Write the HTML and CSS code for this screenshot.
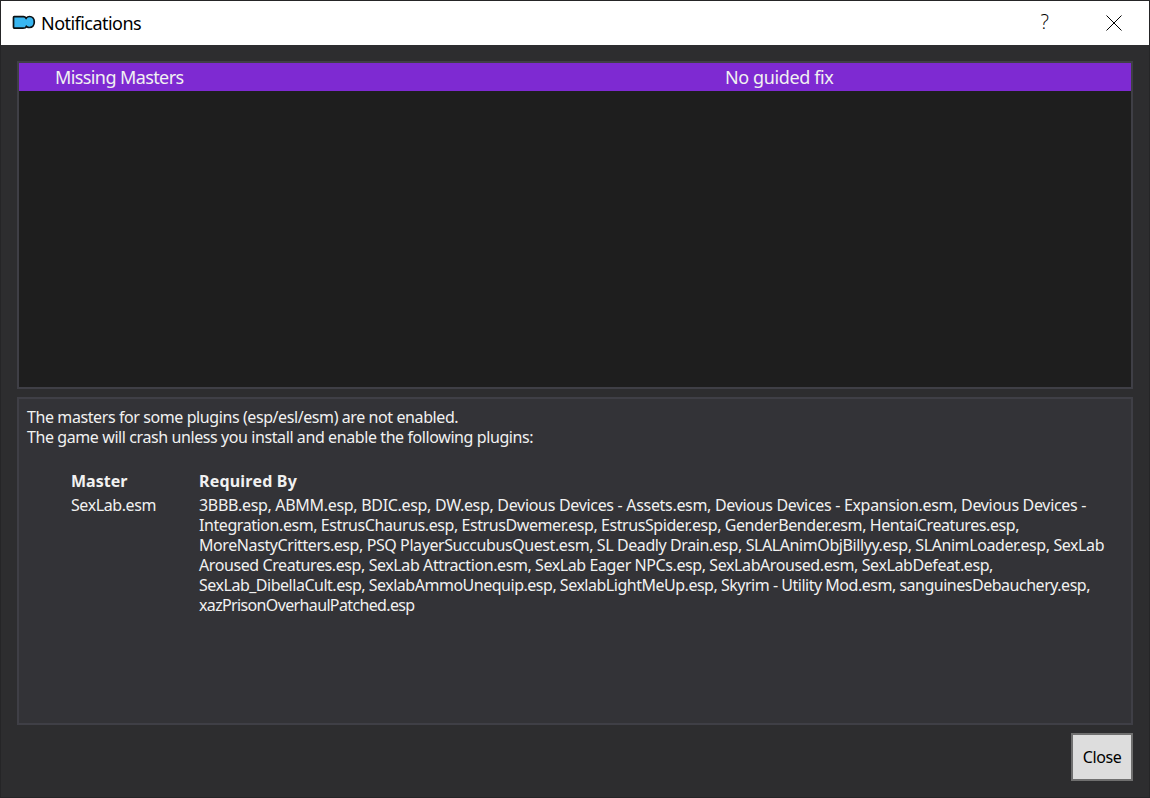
FILE: index.html
```
<!DOCTYPE html>
<html lang="en">
<head>
<meta charset="utf-8">
<title>Notifications</title>
<link rel="stylesheet" href="styles.css">
</head>
<body>
<div class="window">
  <header class="titlebar">
    <svg class="logo" width="24" height="16" viewBox="0 0 24 16"><path d="M2.200 1.700H11.500Q13 1.700 14.200 3Q15.600 1.500 17.500 1.500C20.500 1.500 22.300 4 22.300 7S20.500 12.500 17.500 12.500Q16 12.500 14.700 11.700Q13.500 13.200 11 13.200H2.700Q1.500 13.200 1.500 12V2.500Q1.500 1.700 2.200 1.700Z" fill="#38b6f1" stroke="#0b1013" stroke-width="1.700"/><path d="M13.600 2.500l.8 1.800M13.800 12l.7-1.500" stroke="#0b1013" stroke-width="1.200"/></svg>
    <h1 class="title">Notifications</h1>
    <span class="help">?</span>
    <svg class="close-icon" width="16" height="16" viewBox="0 0 16 16"><path d="M.5.5l15 15M15.500.5l-15 15" stroke="#000" stroke-width="1"/></svg>
  </header>
  <main class="content">
    <section class="list">
      <div class="row"><span class="problem">Missing Masters</span><span class="solution">No guided fix</span></div>
    </section>
    <section class="details">
      <p class="line">The masters for some plugins (esp/esl/esm) are not enabled.</p>
      <p class="line">The game will crash unless you install and enable the following plugins:</p>
      <div class="table">
        <div class="head">Master</div><div class="head head-wide">Required By</div>
        <div class="cell">SexLab.esm</div>
        <div class="cell">
          <div class="plugins-1">3BBB.esp, ABMM.esp, BDIC.esp, DW.esp, Devious Devices - Assets.esm, Devious Devices - Expansion.esm, Devious Devices -</div>
          <div class="plugins-2">Integration.esm, EstrusChaurus.esp, EstrusDwemer.esp, EstrusSpider.esp, GenderBender.esm, HentaiCreatures.esp,</div>
          <div class="plugins-3">MoreNastyCritters.esp, PSQ PlayerSuccubusQuest.esm, SL Deadly Drain.esp, SLALAnimObjBillyy.esp, SLAnimLoader.esp, SexLab</div>
          <div class="plugins-4">Aroused Creatures.esp, SexLab Attraction.esm, SexLab Eager NPCs.esp, SexLabAroused.esm, SexLabDefeat.esp,</div>
          <div class="plugins-5">SexLab_DibellaCult.esp, SexlabAmmoUnequip.esp, SexlabLightMeUp.esp, Skyrim - Utility Mod.esm, sanguinesDebauchery.esp,</div>
          <div class="plugins-6">xazPrisonOverhaulPatched.esp</div>
        </div>
      </div>
    </section>
    <footer class="footer"><button class="close">Close</button></footer>
  </main>
</div>
</body>
</html>
```
FILE: styles.css
```
* { box-sizing: border-box; }
body { margin: 0; font-family: "Noto Sans", sans-serif; background: #2d2d2f; }
.window { height: 798px; border: 1px solid #252527; display: flex; flex-direction: column; background: #2d2d2f; }
.titlebar { height: 44px; background: #fff; display: flex; align-items: center; padding-left: 11px; padding-right: 27px; }
.logo { margin-top: -1px; }
.close-icon { margin-top: -1px; }
.title { margin: 0 auto 0 5px; font-weight: 400; font-size: 18px; line-height: 24px; letter-spacing: -0.54px; color: #000; }
.help { font-family: "Open Sans", sans-serif; font-weight: 300; font-size: 20px; line-height: 24px; margin: -2px 57px 0 0; }
.content { flex: 1; padding: 16px; display: flex; flex-direction: column; }
.list { height: 328px; border: 2px solid #3f3f46; background: #1e1e1e; }
.row { height: 28px; background: #7e2ad2; color: #f1f1f1; display: grid; grid-template-columns: 670px 1fr; padding-left: 36px; font-size: 18px; line-height: 29px; }
.problem { letter-spacing: -0.6px; }
.solution { letter-spacing: -0.38px; }
.details { margin-top: 8px; height: 328px; border: 2px solid #3f3f46; background: #333337; color: #f1f1f1; padding: 8px; font-size: 16px; line-height: 20px; letter-spacing: -0.41px; white-space: nowrap; }
.line { margin: 0; }
.table { margin: 24px 0 0 44px; display: grid; grid-template-columns: 128px 1fr; row-gap: 4px; }
.head { font-weight: 700; letter-spacing: 0; }
.head-wide { letter-spacing: 0.2px; }
.plugins-1 { letter-spacing: -0.31px; }
.plugins-2 { letter-spacing: -0.425px; }
.plugins-3 { letter-spacing: -0.415px; }
.plugins-4 { letter-spacing: -0.41px; }
.plugins-5 { letter-spacing: -0.484px; }
.plugins-6 { letter-spacing: -0.64px; }
.footer { margin-top: 8px; display: flex; justify-content: flex-end; }
.close { width: 62px; height: 48px; border: 2px solid #6f6f6f; background: #ddd; color: #000; font: 16px "Noto Sans", sans-serif; letter-spacing: -0.4px; padding: 0; }
```
